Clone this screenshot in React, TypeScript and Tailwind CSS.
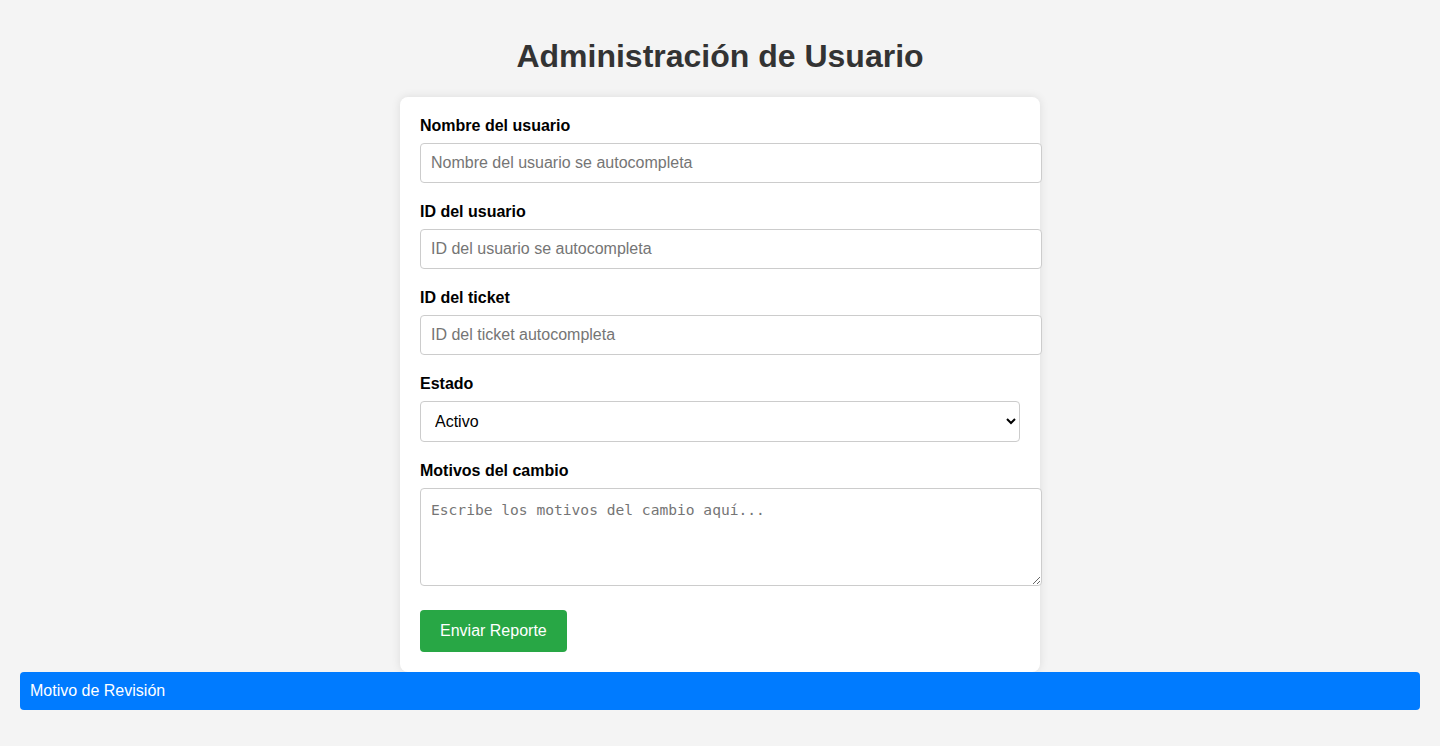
import React, { useState } from 'react';

interface FormData {
  nombre: string;
  idUsuario: string;
  idTicket: string;
  estado: string;
  motivos: string;
}

const inputClass =
  'box-content block w-full h-[18px] px-[10px] py-[10px] mb-5 border border-[#ccc] rounded bg-white text-base text-black placeholder:text-[#757575] focus:outline-none';

const App: React.FC = () => {
  const [formData, setFormData] = useState<FormData>({
    nombre: '',
    idUsuario: '',
    idTicket: '',
    estado: 'activo',
    motivos: '',
  });

  const handleChange = (
    e: React.ChangeEvent<HTMLInputElement | HTMLSelectElement | HTMLTextAreaElement>
  ) => {
    const { name, value } = e.target;
    setFormData(prev => ({ ...prev, [name]: value }));
  };

  return (
    <div className="min-h-screen bg-[#f4f4f4] px-5 pt-[38px] pb-5 font-['Liberation_Sans',Arial,sans-serif]">
      <h1 className="text-center text-[32px] leading-[37px] font-bold text-[#333] mb-[22px]">
        Administración de Usuario
      </h1>

      {/* Form card */}
      <div className="w-[640px] mx-auto bg-white rounded-lg p-5 shadow-[0_0_10px_rgba(0,0,0,0.1)]">
        <form onSubmit={e => e.preventDefault()}>
          <label htmlFor="nombre" className="block font-bold text-base leading-[18px] mb-2 text-black">
            Nombre del usuario
          </label>
          <input
            id="nombre"
            name="nombre"
            type="text"
            placeholder="Nombre del usuario se autocompleta"
            value={formData.nombre}
            onChange={handleChange}
            className={inputClass}
          />

          <label htmlFor="idUsuario" className="block font-bold text-base leading-[18px] mb-2 text-black">
            ID del usuario
          </label>
          <input
            id="idUsuario"
            name="idUsuario"
            type="text"
            placeholder="ID del usuario se autocompleta"
            value={formData.idUsuario}
            onChange={handleChange}
            className={inputClass}
          />

          <label htmlFor="idTicket" className="block font-bold text-base leading-[18px] mb-2 text-black">
            ID del ticket
          </label>
          <input
            id="idTicket"
            name="idTicket"
            type="text"
            placeholder="ID del ticket autocompleta"
            value={formData.idTicket}
            onChange={handleChange}
            className={inputClass}
          />

          <label htmlFor="estado" className="block font-bold text-base leading-[18px] mb-2 text-black">
            Estado
          </label>
          <select
            id="estado"
            name="estado"
            value={formData.estado}
            onChange={handleChange}
            className="block w-[600px] h-[41px] px-[10px] mb-5 border border-[#ccc] rounded bg-white text-base text-black appearance-auto focus:outline-none"
          >
            <option value="activo">Activo</option>
            <option value="inactivo">Inactivo</option>
          </select>

          <label htmlFor="motivos" className="block font-bold text-base leading-[18px] mb-2 text-black">
            Motivos del cambio
          </label>
          <textarea
            id="motivos"
            name="motivos"
            placeholder="Escribe los motivos del cambio aquí..."
            value={formData.motivos}
            onChange={handleChange}
            className="box-border block w-[622px] h-[98px] px-[10px] pt-[12px] pb-[10px] mb-6 border border-[#ccc] rounded bg-white font-['DejaVu_Sans_Mono',monospace] text-[14.6px] leading-[18px] text-black placeholder:text-[#757575] resize focus:outline-none"
          />

          <button
            type="submit"
            className="block h-[42px] px-5 bg-[#28a745] text-white text-base leading-[18px] rounded cursor-pointer"
          >
            Enviar Reporte
          </button>
        </form>
      </div>

      <div className="h-[38px] flex items-center px-[10px] bg-[#007bff] text-white text-base rounded">
        Motivo de Revisión
      </div>
    </div>
  );
};

export default App;
